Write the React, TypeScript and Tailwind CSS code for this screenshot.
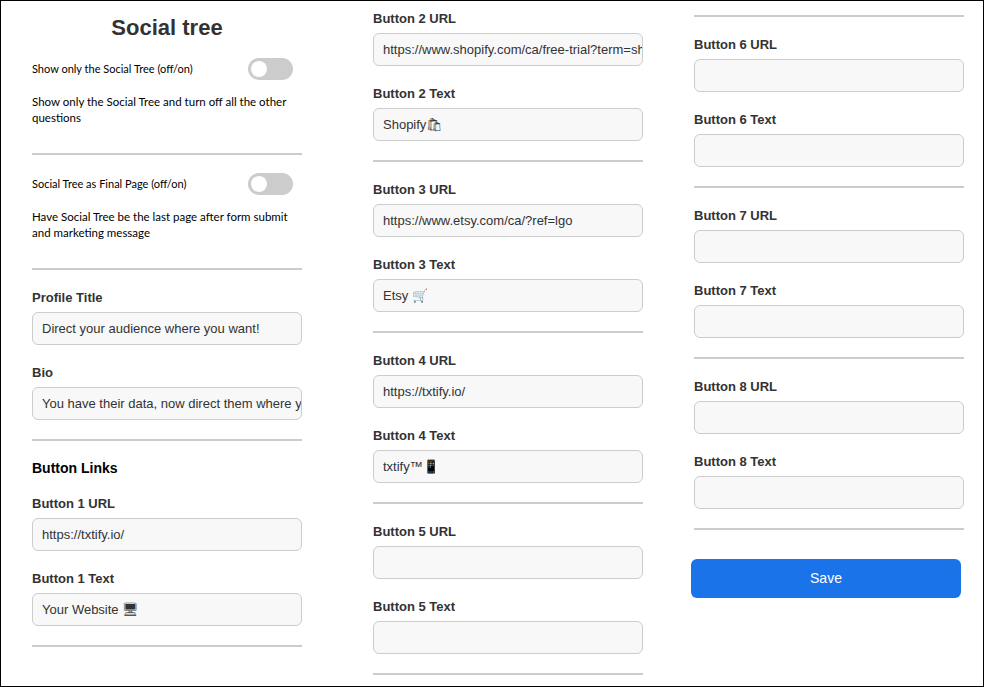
import React from 'react';

const sans = { fontFamily: 'Arial, "Liberation Sans", sans-serif' };
const small = { fontFamily: 'Lato, "Noto Sans", sans-serif' };

function Field({ label, value, first }: { label: string; value?: string; first?: boolean }) {
  return (
    <div className={first ? '' : 'mt-[20px]'}>
      <div className="h-4 text-[13px] leading-4 font-semibold text-[#333]">{label}</div>
      <div className="mt-[6px] h-[33px] rounded-md border border-[#ccc] bg-[#f8f8f8] px-[9px] flex items-center text-[13px] text-[#333] overflow-hidden whitespace-nowrap">
        {value}
      </div>
    </div>
  );
}

function Rule() {
  return <div className="mt-[19px] h-[2px] bg-[#ccc]" />;
}

function Toggle() {
  return (
    <div className="w-[45px] h-[22px] rounded-full bg-[#ccc] relative shrink-0">
      <div className="absolute left-[3px] top-[3px] w-4 h-4 rounded-full bg-white" />
    </div>
  );
}

function ToggleBlock({ title, desc }: { title: string; desc: string }) {
  return (
    <div style={small} className="text-[11px] text-black">
      <div className="flex items-center justify-between pr-[9px]">
        <span>{title}</span>
        <Toggle />
      </div>
      <p className="mt-[14px] leading-4 text-[11.5px]">{desc}</p>
    </div>
  );
}

export default function App() {
  return (
    <div style={sans} className="w-[984px] h-[687px] border border-black bg-white flex overflow-hidden">
      {/* left */}
      <div className="ml-[31px] w-[270px] flex flex-col">
        <h1 className="text-[22px] font-bold text-[#333] text-center mt-[13px] leading-7">Social tree</h1>
        <div className="mt-[16px]">
          <ToggleBlock title="Show only the Social Tree (off/on)" desc="Show only the Social Tree and turn off all the other questions" />
        </div>
        <div className="mt-[27px] h-[2px] bg-[#ccc]" />
        <div className="mt-[18px]">
          <ToggleBlock title="Social Tree as Final Page (off/on)" desc="Have Social Tree be the last page after form submit and marketing message" />
        </div>
        <div className="mt-[27px] h-[2px] bg-[#ccc]" />
        <Field label="Profile Title" value="Direct your audience where you want!" />
        <Field label="Bio" value="You have their data, now direct them where you want" />
        <Rule />
        <div className="mt-[19px] text-[14px] font-bold text-black leading-4">Button Links</div>
        <Field label="Button 1 URL" value="https://txtify.io/" />
        <Field label="Button 1 Text" value="Your Website 🖥" />
        <Rule />
      </div>
      {/* middle */}
      <div className="ml-[71px] w-[270px] flex flex-col pt-[10px]">
        <Field first label="Button 2 URL" value="https://www.shopify.com/ca/free-trial?term=shopify" />
        <Field label="Button 2 Text" value="Shopify🛍" />
        <Rule />
        <Field label="Button 3 URL" value="https://www.etsy.com/ca/?ref=lgo" />
        <Field label="Button 3 Text" value="Etsy 🛒" />
        <Rule />
        <Field label="Button 4 URL" value="https://txtify.io/" />
        <Field label="Button 4 Text" value="txtify™📱" />
        <Rule />
        <Field label="Button 5 URL" />
        <Field label="Button 5 Text" />
        <Rule />
      </div>
      {/* right */}
      <div className="ml-[51px] w-[270px] flex flex-col pt-[14px]">
        <div className="h-[2px] bg-[#ccc]" />
        <Field label="Button 6 URL" />
        <Field label="Button 6 Text" />
        <Rule />
        <Field label="Button 7 URL" />
        <Field label="Button 7 Text" />
        <Rule />
        <Field label="Button 8 URL" />
        <Field label="Button 8 Text" />
        <Rule />
        <button className="mt-[29px] -ml-[3px] h-[39px] w-[270px] rounded-md bg-[#1a73e8] text-white text-[14px]">Save</button>
      </div>
    </div>
  );
}
